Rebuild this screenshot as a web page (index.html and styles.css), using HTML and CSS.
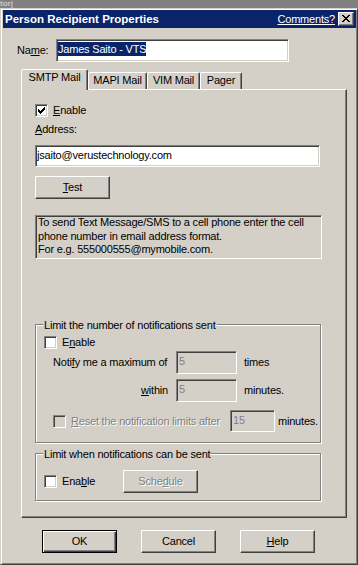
FILE: index.html
```html
<!DOCTYPE html>
<html lang="en">
<head>
    <meta charset="UTF-8">
    <meta name="viewport" content="width=device-width, initial-scale=1.0">
    <title>Person Recipient Properties</title>
    <link rel="stylesheet" href="styles.css">
</head>
<body>

    <div class="behind"><span>tor|</span></div>

    <div class="window">
        <div class="titlebar">
            <span class="title">Person Recipient Properties</span>
            <a class="comments">Comments?</a>
            <span class="close-btn">
                <svg width="8" height="7" viewBox="0 0 8 7" shape-rendering="crispEdges">
                    <rect x="0" y="0" width="2" height="1"/><rect x="6" y="0" width="2" height="1"/>
                    <rect x="1" y="1" width="2" height="1"/><rect x="5" y="1" width="2" height="1"/>
                    <rect x="2" y="2" width="4" height="1"/>
                    <rect x="3" y="3" width="2" height="1"/>
                    <rect x="2" y="4" width="4" height="1"/>
                    <rect x="1" y="5" width="2" height="1"/><rect x="5" y="5" width="2" height="1"/>
                    <rect x="0" y="6" width="2" height="1"/><rect x="6" y="6" width="2" height="1"/>
                </svg>
            </span>
        </div>

        <div class="name-row">
            <span class="name-label">Na<u>m</u>e:</span>
            <div class="field name-field"><span class="selected">James Saito - VTS</span></div>
        </div>

        <div class="tabs">
            <div class="tab tab-smtp active">SMTP Mail</div>
            <div class="tab tab-mapi">MAPI Mail</div>
            <div class="tab tab-vim">VIM Mail</div>
            <div class="tab tab-pager">Pager</div>
        </div>

        <div class="panel">
            <div class="check-row">
                <span class="checkbox">
                    <svg width="7" height="7" viewBox="0 0 7 7" shape-rendering="crispEdges">
                        <rect x="0" y="2" width="1" height="3"/><rect x="1" y="3" width="1" height="3"/>
                        <rect x="2" y="4" width="1" height="3"/><rect x="3" y="3" width="1" height="3"/>
                        <rect x="4" y="2" width="1" height="3"/><rect x="5" y="1" width="1" height="3"/>
                        <rect x="6" y="0" width="1" height="3"/>
                    </svg>
                </span>
                <span class="check-text"><u>E</u>nable</span>
            </div>

            <div class="address-label"><u>A</u>ddress:</div>
            <div class="field address-field">jsaito@verustechnology.com</div>

            <div class="button test-btn"><span><u>T</u>est</span></div>

            <div class="info-box">To send Text Message/SMS to a cell phone enter the cell<br>phone number in email address format.<br>For e.g. 555000555@mymobile.com.</div>

            <div class="group group-count">
                <div class="legend">Limit the number of notifications sent</div>
                <div class="check-row count-enable">
                    <span class="checkbox"></span>
                    <span class="check-text">E<u>n</u>able</span>
                </div>
                <div class="limit-row notify-row">
                    <span class="limit-label">Noti<u>f</u>y me a maximum of</span>
                    <div class="field disabled limit-field">5</div>
                    <span class="unit">times</span>
                </div>
                <div class="limit-row within-row">
                    <span class="limit-label align-right"><u>w</u>ithin</span>
                    <div class="field disabled limit-field">5</div>
                    <span class="unit">minutes.</span>
                </div>
                <div class="limit-row reset-row">
                    <span class="checkbox disabled"></span>
                    <span class="reset-label grayed"><u>R</u>eset the notification limits after</span>
                    <div class="field disabled reset-field">15</div>
                    <span class="unit reset-unit">minutes.</span>
                </div>
            </div>

            <div class="group group-schedule">
                <div class="legend">Limit when notifications can be sent</div>
                <div class="schedule-row">
                    <span class="checkbox"></span>
                    <span class="check-text schedule-label">Ena<u>b</u>le</span>
                    <div class="button"><span class="grayed">Sche<u>d</u>ule</span></div>
                </div>
            </div>
        </div>

        <div class="buttons">
            <div class="button default-btn"><span>OK</span></div>
            <div class="button"><span>Cancel</span></div>
            <div class="button"><span><u>H</u>elp</span></div>
        </div>
    </div>

</body>
</html>
```

FILE: styles.css
```css
* {
    box-sizing: border-box;
}

body {
    margin: 0;
    width: 358px;
    height: 565px;
    overflow: hidden;
    background-color: #808080;
    font-family: "Liberation Sans", Arial, sans-serif;
    font-size: 11px;
    line-height: 13px;
    letter-spacing: -0.2px;
    color: #000;
}

u {
    text-decoration-thickness: 1px;
    text-underline-offset: 1px;
}

/* strip of the window behind */
.behind {
    height: 8px;
    overflow: hidden;
}

    .behind span {
        display: block;
        font-size: 8px;
        line-height: 8px;
        font-weight: bold;
        letter-spacing: 0;
        color: #c8c8c8;
    }

/* dialog frame */
.window {
    height: 557px;
    background-color: #d4d0c8;
    border: 1px solid;
    border-color: #d4d0c8 #404040 #404040 #d4d0c8;
    padding: 1px 1px 0 2px;
    box-shadow: inset 1px 1px #fff, inset -1px -1px #808080;
}

.titlebar {
    display: flex;
    align-items: center;
    height: 18px;
    padding: 0 2px 0 2px;
    background-color: #0a246a;
    color: #fff;
}

.title {
    flex: 1;
    font-weight: bold;
    font-size: 11.5px;
    letter-spacing: 0;
}

.comments {
    text-decoration: underline;
    margin-right: 3px;
}

.close-btn {
    display: flex;
    align-items: center;
    justify-content: center;
    width: 16px;
    height: 14px;
    background-color: #d4d0c8;
    border: 1px solid;
    border-color: #fff #404040 #404040 #fff;
    box-shadow: inset -1px -1px #808080;
    padding: 0 1px 1px 0;
}

/* sunken edit fields */
.field {
    background-color: #fff;
    border: 1px solid;
    border-color: #808080 #fff #fff #808080;
    box-shadow: inset 1px 1px #404040, inset -1px -1px #d4d0c8;
    padding: 2px 2px 0 1px;
    line-height: 14px;
    white-space: nowrap;
    overflow: hidden;
}

    .field.disabled {
        background-color: #d4d0c8;
        color: #808080;
        padding-left: 2px;
    }

.name-row {
    display: flex;
    align-items: center;
    margin: 11px 0 0 14px;
}

.name-label {
    width: 39px;
}

.name-field {
    width: 233px;
    height: 23px;
}

.selected {
    background-color: #0a246a;
    color: #fff;
    display: inline-block;
    height: 14px;
}

/* tabs */
.tabs {
    display: flex;
    align-items: flex-end;
    height: 20px;
    margin: 7px 0 0 18px;
}

.tab {
    height: 17px;
    padding-top: 1px;
    text-align: center;
    border-top: 1px solid #fff;
    border-left: 1px solid #fff;
    border-right: 1px solid #404040;
    border-radius: 2px 2px 0 0;
    box-shadow: inset -1px 0 #808080;
}

    .tab.active {
        position: relative;
        height: 21px;
        margin-bottom: -1px;
        background-color: #d4d0c8;
    }

.tab-smtp {
    width: 67px;
}

.tab-mapi {
    width: 59px;
}

.tab-vim {
    width: 53px;
}

.tab-pager {
    width: 42px;
}

.panel {
    width: 326px;
    height: 429px;
    margin-left: 18px;
    border: 1px solid;
    border-color: #fff #404040 #404040 #fff;
    box-shadow: inset -1px -1px #808080;
    padding: 14px 0 0 13px;
}

/* checkboxes */
.check-row {
    display: flex;
    align-items: center;
    height: 13px;
}

.checkbox {
    display: flex;
    align-items: center;
    justify-content: center;
    flex: none;
    width: 13px;
    height: 13px;
    background-color: #fff;
    border: 1px solid;
    border-color: #808080 #fff #fff #808080;
    box-shadow: inset 1px 1px #404040, inset -1px -1px #d4d0c8;
}

    .checkbox.disabled {
        background-color: #d4d0c8;
    }

.check-text {
    margin-left: 5px;
}

.address-label {
    margin-top: 6px;
}

.address-field {
    width: 285px;
    height: 22px;
    margin-top: 9px;
}

/* raised push buttons */
.button {
    display: flex;
    align-items: center;
    justify-content: center;
    width: 75px;
    height: 23px;
    border: 1px solid;
    border-color: #fff #404040 #404040 #fff;
    box-shadow: inset -1px -1px #808080;
    padding-bottom: 1px;
}

.test-btn {
    margin-top: 9px;
}

.default-btn {
    border-color: #000;
    box-shadow: inset 1px 1px #fff, inset -1px -1px #404040, inset -2px -2px #808080;
}

.grayed {
    color: #808080;
    text-shadow: 1px 1px #fff;
}

.info-box {
    width: 287px;
    height: 44px;
    margin-top: 16px;
    border: 1px solid;
    border-color: #808080 #fff #fff #808080;
    box-shadow: inset 1px 1px #404040, inset -1px -1px #d4d0c8;
    padding: 0 0 0 2px;
    line-height: 13.5px;
    white-space: nowrap;
    overflow: hidden;
}

/* etched group boxes */
.group {
    width: 286px;
    border: 1px solid #808080;
    box-shadow: inset 1px 1px #fff, 1px 1px #fff;
    padding-left: 8px;
}

.group-count {
    height: 119px;
    margin-top: 65px;
}

.group-schedule {
    height: 48px;
    margin-top: 10px;
}

.legend {
    width: fit-content;
    margin: -6px 0 0 -1px;
    padding: 0 1px;
    background-color: #d4d0c8;
}

.count-enable {
    margin-top: 4px;
}

.limit-row {
    display: flex;
    align-items: center;
    padding-left: 9px;
}

.limit-label {
    width: 123px;
}

    .limit-label.align-right {
        text-align: right;
        padding-right: 8px;
    }

.limit-field {
    width: 61px;
    height: 23px;
}

.unit {
    margin-left: 7px;
}

.notify-row {
    margin-top: 2px;
}

.within-row {
    margin-top: 5px;
}

.reset-row {
    margin-top: 8px;
}

.reset-label {
    width: 159px;
    margin-left: 5px;
    white-space: nowrap;
}

.reset-field {
    width: 45px;
    height: 22px;
}

.reset-unit {
    margin-left: 3px;
}

.schedule-row {
    display: flex;
    align-items: center;
    margin-top: 9px;
}

.schedule-label {
    width: 61px;
}

.buttons {
    display: flex;
    gap: 24px;
    margin: 12px 0 0 39px;
}
```
